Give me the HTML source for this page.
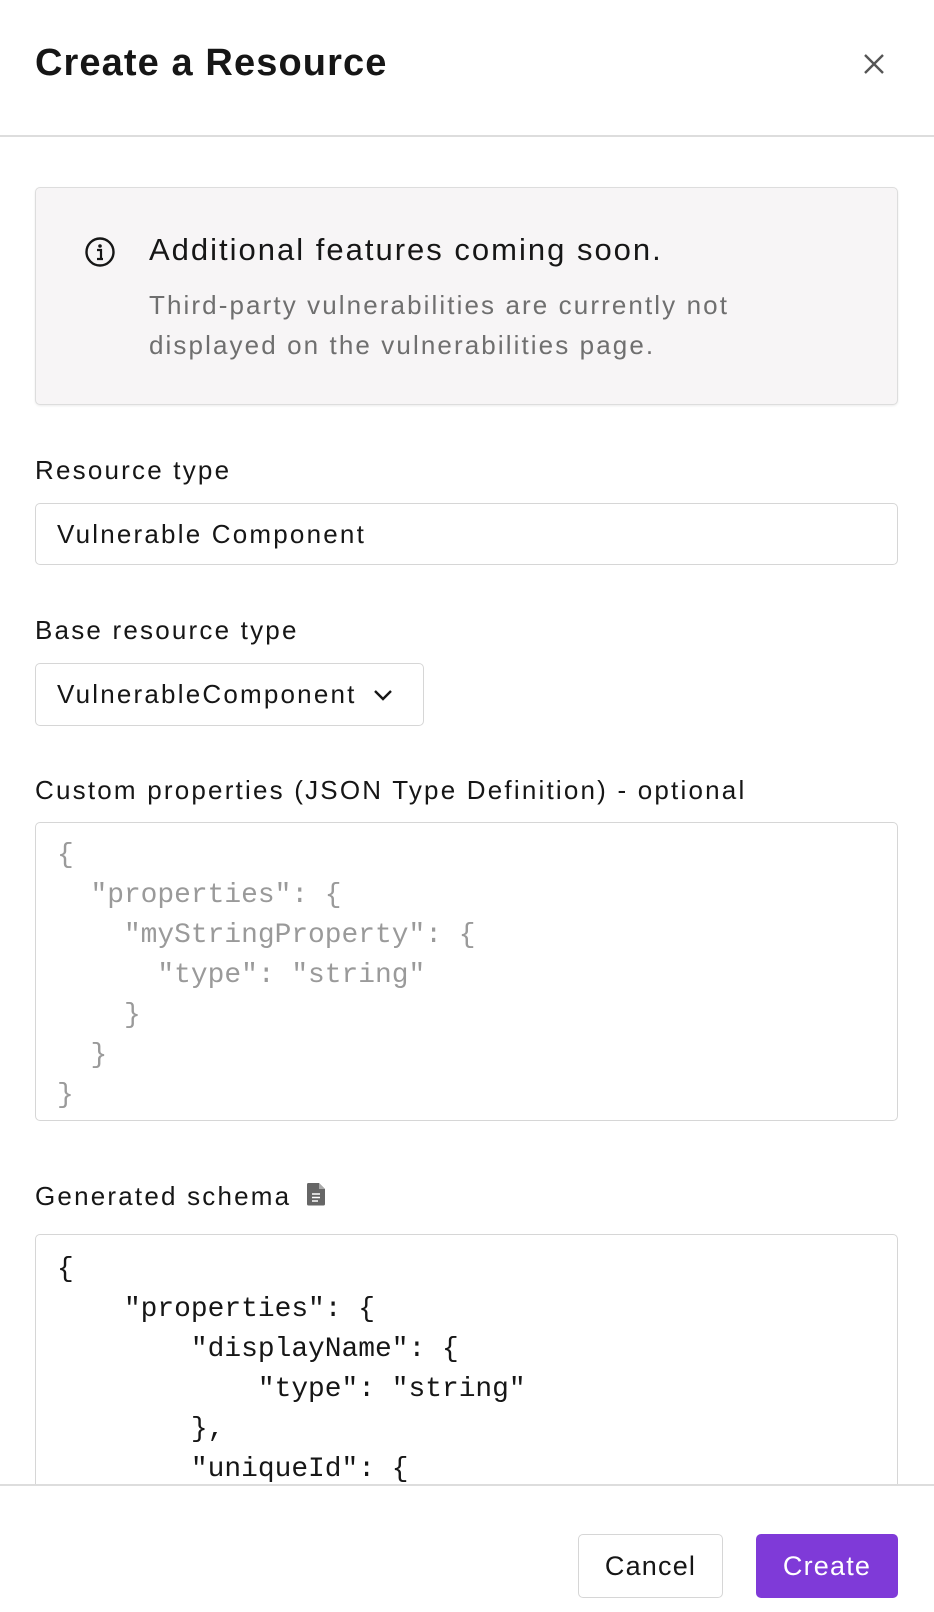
<!DOCTYPE html>
<html><head><meta charset="utf-8"><style>
*{box-sizing:border-box;margin:0;padding:0}
body{width:934px;height:1612px;background:#fff;font-family:"Liberation Sans",sans-serif;color:#161616;position:relative;overflow:hidden}
.a{position:absolute}
.title{left:35px;top:42px;font-size:38px;font-weight:bold;letter-spacing:1.1px}
.hr{left:0;width:934px;height:2px;background:#ddd}
.info{left:35px;top:187px;width:863px;height:218px;background:#f7f5f6;border:1.5px solid #ddd;border-radius:5px;box-shadow:0 1px 2px rgba(0,0,0,.08)}
.lbl{left:35px;font-size:26px;letter-spacing:2.2px;font-weight:500;color:#161616}
.inp{left:35px;border:1.5px solid #d6d6d6;border-radius:5px;background:#fff;font-size:26px;letter-spacing:2.2px;padding-left:21px;display:flex;align-items:center}
.mono{font-family:"Liberation Mono",monospace;font-size:27.9px;line-height:40px;white-space:pre}
.btn{top:1534px;height:64px;border-radius:5px;font-size:27px;letter-spacing:1.2px;display:flex;align-items:center;justify-content:center}
</style></head><body>
<div class="a title">Create a Resource</div>
<svg class="a" style="left:862px;top:52px" width="24" height="24" viewBox="0 0 24 24"><path d="M3 3L21 21M21 3L3 21" stroke="#555" stroke-width="2.4"/></svg>
<div class="a hr" style="top:135px"></div>

<div class="a info"></div>
<svg class="a" style="left:84px;top:236px" width="32" height="32" viewBox="0 0 32 32"><circle cx="16" cy="16" r="13.5" fill="none" stroke="#161616" stroke-width="2.4"/><circle cx="16" cy="10" r="1.8" fill="#161616"/><path d="M13 14h4v9M13 23h6" stroke="#161616" stroke-width="2.2" fill="none"/></svg>
<div class="a" style="left:149px;top:232px;font-size:31px;letter-spacing:2px;font-weight:500">Additional features coming soon.</div>
<div class="a" style="left:149px;top:285px;font-size:26px;letter-spacing:2.1px;line-height:40px;color:#6f6f6f">Third-party vulnerabilities are currently not<br>displayed on the vulnerabilities page.</div>

<div class="a lbl" style="top:455px">Resource type</div>
<div class="a inp" style="top:503px;width:863px;height:62px">Vulnerable Component</div>

<div class="a lbl" style="top:615px">Base resource type</div>
<div class="a inp" style="top:663px;width:389px;height:63px">VulnerableComponent
<svg style="margin-left:16px" width="20" height="12" viewBox="0 0 20 12"><path d="M2 2l8 8 8-8" stroke="#161616" stroke-width="2.4" fill="none"/></svg></div>

<div class="a lbl" style="top:775px">Custom properties (JSON Type Definition) - optional</div>
<div class="a" style="left:35px;top:822px;width:863px;height:299px;border:1.5px solid #d6d6d6;border-radius:5px"></div>
<div class="a mono" style="left:57px;top:836px;color:#9a9a9a">{
  "properties": {
    "myStringProperty": {
      "type": "string"
    }
  }
}</div>

<div class="a lbl" style="top:1181px">Generated schema</div>
<svg class="a" style="left:306px;top:1182px" width="20" height="24" viewBox="0 0 20 24"><path d="M2 1h11l6 6v15a1.5 1.5 0 0 1-1.5 1.5h-15A1.5 1.5 0 0 1 1 22V2.5A1.5 1.5 0 0 1 2 1z" fill="#666"/><path d="M13 1v6h6" fill="#aaa"/><path d="M6 12h8M6 15.5h8M6 19h6" stroke="#fff" stroke-width="1.6"/></svg>
<div class="a" style="left:35px;top:1234px;width:863px;height:300px;border:1.5px solid #d6d6d6;border-radius:5px"></div>
<div class="a mono" style="left:57px;top:1250px;color:#161616">{
    "properties": {
        "displayName": {
            "type": "string"
        },
        "uniqueId": {</div>
<div class="a" style="left:0;top:1484px;width:934px;height:128px;background:#fff;border-top:2px solid #ddd"></div>
<div class="a btn" style="left:578px;width:145px;border:1.5px solid #d6d6d6;background:#fff;color:#161616">Cancel</div>
<div class="a btn" style="left:756px;width:142px;background:#7f3ad8;color:#fff;font-weight:500">Create</div>
</body></html>
